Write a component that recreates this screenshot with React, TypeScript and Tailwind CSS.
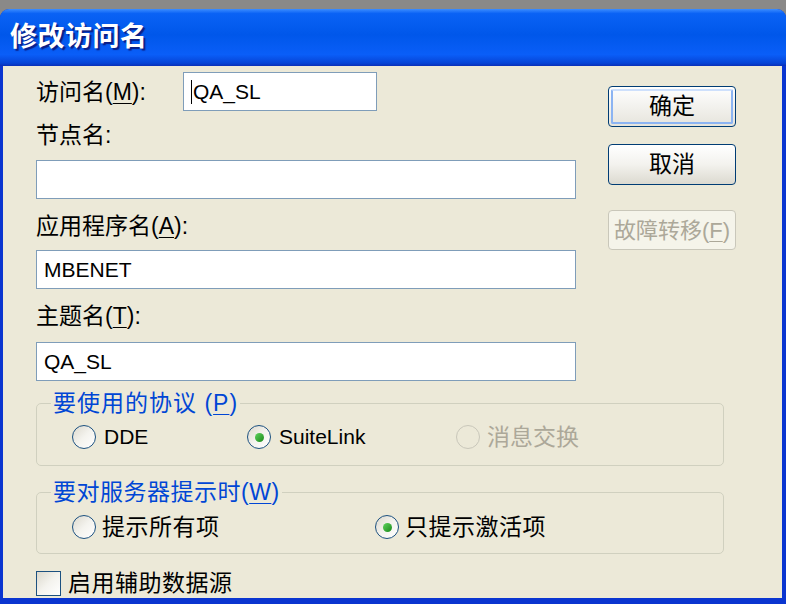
import React from "react";

const FONT = "font-['Liberation_Sans','Noto_Sans_CJK_SC',sans-serif]";

function U({ children }: { children: React.ReactNode }) {
  return <span className="underline underline-offset-[3px] decoration-1">{children}</span>;
}

function Radio({ checked, disabled }: { checked?: boolean; disabled?: boolean }) {
  if (disabled) {
    return <span className="w-[24px] h-[24px] rounded-full border border-[#c9c7ba] shrink-0" />;
  }
  return (
    <span className="w-[24px] h-[24px] rounded-full border-[1.5px] border-[#1c5180] bg-gradient-to-br from-[#dcd9cd] via-[#f4f3ee] to-white flex items-center justify-center shrink-0">
      {checked && <span className="w-[9px] h-[9px] rounded-full bg-gradient-to-br from-[#5ed35e] to-[#158a15]" />}
    </span>
  );
}

function Field({ children, className = "" }: { children?: React.ReactNode; className?: string }) {
  return (
    <div className={`h-[39px] bg-white border border-[#7f9db9] flex items-center pl-[7px] text-[21px] text-black ${className}`}>
      {children}
    </div>
  );
}

function Label({ children, className = "" }: { children: React.ReactNode; className?: string }) {
  return <div className={`h-[26px] leading-[26px] text-[23px] text-black ${className}`}>{children}</div>;
}

export default function App() {
  return (
    <div className={`w-[786px] h-[604px] bg-[#8a8988] pt-[9px] overflow-hidden ${FONT}`}>
      <div className="h-[595px] flex flex-col rounded-t-[9px] overflow-hidden bg-[#0a35d0]">
        <div className="h-[57px] shrink-0 flex items-center pl-[10px] bg-[linear-gradient(180deg,#3c8dff_0%,#0a62f5_8%,#0057ea_45%,#0a5ef8_80%,#0644d6_95%,#0a2fb8_100%)]">
          <span className="text-white font-bold text-[27px] tracking-[0.5px] [text-shadow:2px_2px_1px_#0b1f86]">修改访问名</span>
        </div>
        <div className="flex-1 ml-[3px] mr-[4px] mb-[6px] bg-[#ece9d8] pl-[33px] flex flex-col">
          <div className="flex">
            <div className="w-[540px] pt-[6px] flex flex-col">
              <div className="flex items-center h-[39px]">
                <Label className="w-[147px]">
                  访问名(<U>M</U>):
                </Label>
                <Field className="w-[194px]">
                  <span className="w-[1px] h-[24px] bg-black mr-[1px]" />
                  QA_SL
                </Field>
              </div>
              <Label className="mt-[11px]">节点名:</Label>
              <Field className="mt-[12px]" />
              <Label className="mt-[14px]">
                应用程序名(<U>A</U>):
              </Label>
              <Field className="mt-[11px]">MBENET</Field>
              <Label className="mt-[14px]">
                主题名(<U>T</U>):
              </Label>
              <Field className="mt-[13px]">QA_SL</Field>
            </div>
            <div className="ml-[32px] w-[128px] pt-[20px] flex flex-col">
              <div className="h-[41px] rounded-[4px] border border-[#003c74] bg-gradient-to-b from-white to-[#e6e4dc] p-[2px]">
                <div className="h-full rounded-[2px] border-2 border-[#8cb4f2] border-t-[#cee0fc] flex items-center justify-center text-[23px] text-black">
                  确定
                </div>
              </div>
              <div className="mt-[17px] h-[41px] rounded-[4px] border border-[#003c74] bg-gradient-to-b from-white via-[#f3f2ee] to-[#dcdad0] flex items-center justify-center text-[23px] text-black">
                取消
              </div>
              <div className="mt-[25px] h-[40px] rounded-[4px] border border-[#c9c7ba] bg-[#f5f4ea] flex items-center justify-center text-[22px] text-[#aca899]">
                故障转移(<U>F</U>)
              </div>
            </div>
          </div>

          <fieldset className="mt-[9px] w-[688px] border border-[#d0d0bf] rounded-[5px] pb-[15px]">
            <legend className="ml-[14px] px-[2px] h-[26px] leading-[26px] text-[23px] tracking-[1px] text-[#0046d5]">
              要使用的协议 (<U>P</U>)
            </legend>
            <div className="pt-[8px] pl-[35px] flex items-center h-[34px]">
              <div className="w-[175px] flex items-center gap-[8px] text-[21px]">
                <Radio />
                <span>DDE</span>
              </div>
              <div className="w-[209px] flex items-center gap-[8px] text-[21px]">
                <Radio checked />
                <span>SuiteLink</span>
              </div>
              <div className="flex items-center gap-[7px] text-[23px] text-[#aca899]">
                <Radio disabled />
                <span>消息交换</span>
              </div>
            </div>
          </fieldset>

          <fieldset className="mt-[13px] w-[688px] border border-[#d0d0bf] rounded-[5px] pb-[13px]">
            <legend className="ml-[14px] px-[2px] h-[26px] leading-[26px] text-[23px] tracking-[0.5px] text-[#0046d5]">
              要对服务器提示时(<U>W</U>)
            </legend>
            <div className="pt-[9px] pl-[35px] flex items-center h-[35px] text-[23px] tracking-[0.5px]">
              <div className="w-[303px] flex items-center gap-[6px]">
                <Radio />
                <span>提示所有项</span>
              </div>
              <div className="flex items-center gap-[6px]">
                <Radio checked />
                <span>只提示激活项</span>
              </div>
            </div>
          </fieldset>

          <div className="mt-[16px] flex items-center h-[26px] gap-[7px]">
            <span className="w-[25px] h-[25px] border-[1.5px] border-[#1c5180] bg-gradient-to-br from-[#dcd9cd] via-[#f4f3ee] to-white" />
            <span className="text-[23px] tracking-[0.5px] text-black">启用辅助数据源</span>
          </div>
        </div>
      </div>
    </div>
  );
}
